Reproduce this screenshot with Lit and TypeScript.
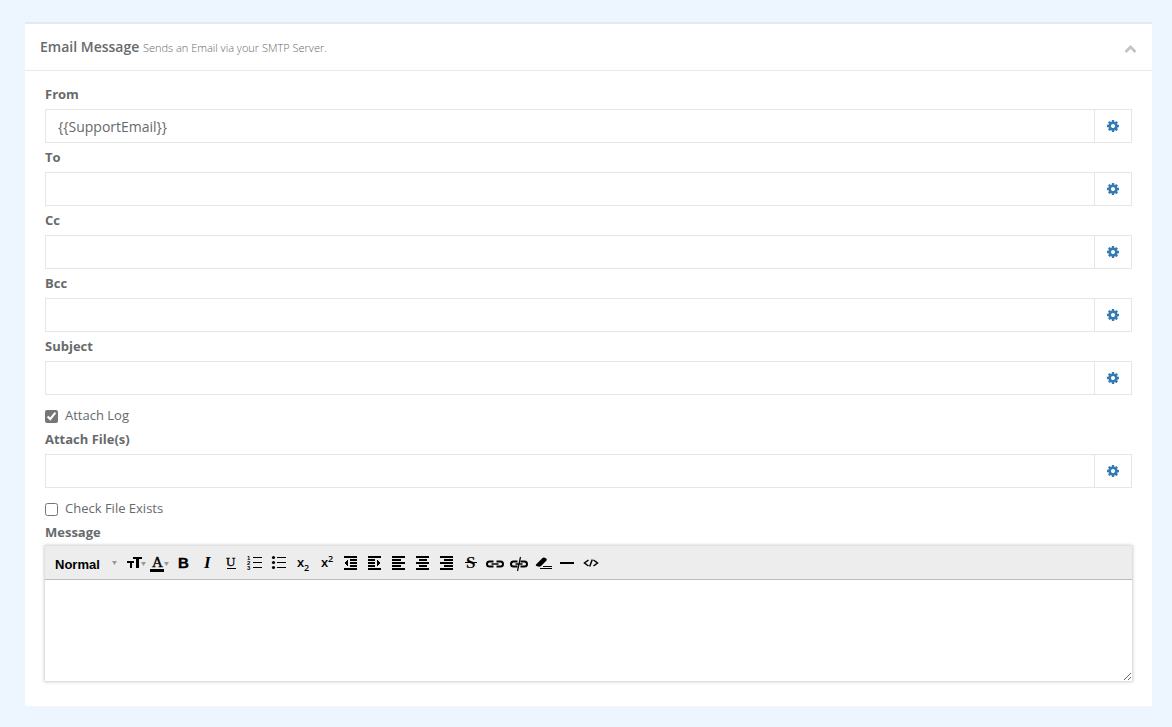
import { LitElement, html, svg, css } from "lit";
import { customElement, property } from "lit/decorators.js";

interface Tool {
  name: string;
  icon: unknown;
}

const rows = (spans: [number, number][]) =>
  spans.map(([x, w], i) => svg`<rect x=${x} y=${5 + i * 3} width=${w} height="2" />`);

const link = svg`
  <g fill="none" stroke="#000" stroke-width="2" shape-rendering="auto">
    <path d="M10.500 11H6.500a2.500 2.500 0 0 0 0 5h4M13.500 11h4a2.500 2.500 0 0 1 0 5h-4" transform="translate(0 -.5)" />
    <path d="M8.500 13h7" stroke-width="1.500" />
  </g>`;

const TOOLS: Tool[] = [
  {
    name: "Bold",
    icon: svg`<text x="7" y="17" class="sans" font-size="15" stroke="#000" stroke-width=".4">B</text>`,
  },
  {
    name: "Italic",
    icon: svg`<text x="9" y="17" class="serif" font-weight="700" font-style="italic" font-size="17">I</text>`,
  },
  {
    name: "Underline",
    icon: svg`<text x="7" y="15" class="serif" font-size="13" stroke="#000" stroke-width=".3">U</text><rect x="8" y="17" width="9" height="1" />`,
  },
  {
    name: "Numbered list",
    icon: svg`<g class="sans" font-size="6"><text x="4" y="9">1</text><text x="4" y="14">2</text><text x="4" y="19">3</text></g>
      <path d="M10 6h9v1h-9zM10 11h9v1h-9zM10 16h9v1h-9z" />`,
  },
  {
    name: "Bulleted list",
    icon: svg`<g shape-rendering="auto"><circle cx="6.5" cy="6.5" r="1.6" /><circle cx="6.5" cy="11.5" r="1.6" /><circle cx="6.5" cy="16.5" r="1.6" /></g>
      <path d="M10 6h9v1h-9zM10 11h9v1h-9zM10 16h9v1h-9z" />`,
  },
  {
    name: "Subscript",
    icon: svg`<text x="6" y="16" class="open" font-size="13">x</text><text x="13" y="20" class="open" font-size="9">2</text>`,
  },
  {
    name: "Superscript",
    icon: svg`<text x="6" y="16" class="open" font-size="13">x</text><text x="13" y="11" class="open" font-size="9">2</text>`,
  },
  {
    name: "Outdent",
    icon: svg`${rows([[5, 13], [11, 7], [11, 7], [11, 7], [5, 13]])}<path d="M9 9v6L5 12z" />`,
  },
  {
    name: "Indent",
    icon: svg`${rows([[5, 13], [5, 7], [5, 7], [5, 7], [5, 13]])}<path d="M14 9v6l4-3z" />`,
  },
  { name: "Align left", icon: rows([[5, 13], [5, 9], [5, 13], [5, 9], [5, 13]]) },
  { name: "Align centre", icon: rows([[5, 13], [8, 8], [5, 13], [8, 8], [5, 13]]) },
  { name: "Align right", icon: rows([[5, 13], [9, 9], [5, 13], [9, 9], [5, 13]]) },
  {
    name: "Strikethrough",
    icon: svg`<text x="7" y="17" class="serif" font-weight="700" font-size="17">S</text><rect x="6" y="11" width="12" height="1" />`,
  },
  { name: "Insert link", icon: link },
  {
    name: "Remove link",
    icon: svg`${link}<path d="M13.5 6L10.5 20" stroke="#000" stroke-width="1.2" shape-rendering="auto" />`,
  },
  {
    name: "Clear format",
    icon: svg`<path d="M5 13.5L11.5 7q1-.8 2.2-.3l1.6.8q1 .8.2 2L10 15q-.8.9-2 .7l-2.500-.6q-1.200-.6-.5-1.600z" shape-rendering="auto" /><path d="M12 15h9v1h-9zM9 17h12v1H9z" />`,
  },
  { name: "Horizontal line", icon: svg`<rect x="5" y="11" width="14" height="2" />` },
  {
    name: "View source",
    icon: svg`<path d="M9.500 9L5.500 12l4 3M14.500 9l4 3-4 3M13.300 8.500l-2.600 7" fill="none" stroke="#000" stroke-width="1.500" shape-rendering="auto" />`,
  },
];

@customElement("macro-field")
class MacroField extends LitElement {
  @property() label = "";
  @property() value = "";

  static styles = css`
    :host {
      display: block;
    }
    .label {
      display: block;
      margin-bottom: 5px;
      font-weight: 700;
      line-height: 19px;
    }
    .group {
      display: flex;
      height: 34px;
      box-sizing: border-box;
      border: 1px solid #e5e6e7;
    }
    .input {
      flex: 1;
      min-width: 0;
      padding: 0 12px;
      border: 0;
      background: none;
      color: #676a6c;
      font: 14px "Open Sans", sans-serif;
    }
    .gear {
      display: flex;
      align-items: center;
      justify-content: center;
      width: 37px;
      padding: 0;
      border: 0;
      border-left: 1px solid #e5e6e7;
      background: #fff;
      cursor: pointer;
    }
    .icon {
      fill: #337ab7;
    }
  `;

  render() {
    return html`
      <label class="label" for="field">${this.label}</label>
      <div class="group">
        <input class="input" id="field" type="text" .value=${this.value} />
        <button class="gear" type="button" aria-label="Insert a value in ${this.label}">
          <svg class="icon" width="12" height="12" viewBox="0 0 1536 1536">
            <path
              d="M1024 768q0-106-75-181t-181-75-181 75-75 181 75 181 181 75 181-75 75-181zm512-109v222q0 12-8 23t-20 13l-185 28q-19 54-39 91 35 50 107 138 10 12 10 25t-9 23q-27 37-99 108t-94 71q-12 0-26-9l-138-108q-44 23-91 38-16 136-29 186-7 28-36 28H657q-14 0-24.500-8.500T621 1506l-28-184q-49-16-90-37l-141 107q-10 9-25 9-14 0-25-11-126-114-165-168-7-10-7-23 0-12 8-23 15-21 51-66.500t54-70.500q-27-50-41-99L29 913q-13-2-21-12.500T0 877V655q0-12 8-23t19-13l186-28q14-46 39-92-40-57-107-138-10-12-10-24 0-10 9-23 26-36 98.500-107.500T337 135q13 0 26 10l138 107q44-23 91-38 16-136 29-186 7-28 36-28h222q14 0 24.500 8.500T915 30l28 184q49 16 90 37l142-107q9-9 24-9 13 0 25 10 129 119 165 170 7 8 7 22 0 12-8 23-15 21-51 66.500t-54 70.500q26 50 41 98l183 28q13 2 21 12.500t8 23.500z"
            />
          </svg>
        </button>
      </div>
    `;
  }
}

@customElement("message-editor")
class MessageEditor extends LitElement {
  static styles = css`
    :host {
      display: block;
    }
    .label {
      display: block;
      margin-bottom: 4px;
      font-weight: 700;
      line-height: 19px;
    }
    .editor {
      box-shadow: 0 0 3px 1px rgba(0, 0, 0, 0.2);
    }
    .toolbar {
      display: flex;
      flex-wrap: wrap;
      align-items: center;
      min-height: 33px;
      padding-left: 10px;
      border-bottom: 1px solid #bbb;
      background: #ededed;
    }
    .style {
      display: flex;
      align-items: center;
      margin-right: 6px;
    }
    .select {
      appearance: none;
      width: 57px;
      height: 24px;
      padding: 4px 0 0;
      border: 0;
      background: none;
      color: #000;
      font: 700 13px "Liberation Sans", Arial, sans-serif;
    }
    .tool {
      width: 24px;
      height: 24px;
      padding: 0;
      border: 0;
      background: none;
      cursor: pointer;
    }
    .glyph {
      display: block;
      shape-rendering: crispEdges;
    }
    .caret {
      fill: #999;
      shape-rendering: auto;
    }
    .sans {
      font-family: "Liberation Sans", Arial, sans-serif;
      font-weight: 700;
    }
    .serif {
      font-family: "Liberation Serif", "Times New Roman", serif;
    }
    .open {
      font-family: "Open Sans", sans-serif;
      font-weight: 600;
    }
    .text {
      display: block;
      width: 100%;
      height: 101px;
      box-sizing: border-box;
      padding: 8px;
      border: 0;
      background: #fff;
      color: #676a6c;
      font: 14px "Open Sans", sans-serif;
      resize: vertical;
    }
  `;

  render() {
    return html`
      <label class="label" for="message">Message</label>
      <div class="editor">
        <div class="toolbar" role="toolbar">
          <div class="style">
            <select class="select" aria-label="Paragraph style">
              <option>Normal</option>
            </select>
            <svg class="caret" width="5" height="4" viewBox="0 0 5 4"><path d="M0 0h5L2.500 4z" /></svg>
          </div>
          <button class="tool" type="button" aria-label="Font size">
            <svg class="glyph" width="24" height="24" viewBox="0 0 24 24">
              <path d="M9 6h9v2h-3v9h-3V8H9zM3 10h7v2H8v5H6v-5H3z" transform="translate(1)" />
              <path class="caret" d="M18 11h5l-2.500 4z" />
            </svg>
          </button>
          <button class="tool" type="button" aria-label="Font colour">
            <svg class="glyph" width="24" height="24" viewBox="0 0 24 24">
              <text x="5" y="16" class="serif" font-size="15" stroke="#000" stroke-width=".4">A</text>
              <rect x="3" y="18" width="14" height="3" />
              <path class="caret" d="M17 11h5l-2.500 4z" />
            </svg>
          </button>
          ${TOOLS.map(
            (tool) => html`
              <button class="tool" type="button" aria-label=${tool.name}>
                <svg class="glyph" width="24" height="24" viewBox="0 0 24 24">${tool.icon}</svg>
              </button>
            `
          )}
        </div>
        <textarea class="text" id="message"></textarea>
      </div>
    `;
  }
}

@customElement("app-root")
class AppRoot extends LitElement {
  static styles = css`
    :host {
      display: block;
      min-height: 100vh;
      box-sizing: border-box;
      padding: 22px 20px 21px 25px;
      background: #edf6fe;
      color: #676a6c;
      font: 13px/19px "Open Sans", sans-serif;
    }
    .panel {
      border-top: 2px solid #e3eaef;
      background: #fff;
    }
    .header {
      display: flex;
      align-items: center;
      justify-content: space-between;
      height: 46px;
      padding: 0 15px;
      border-bottom: 1px solid #e7eaec;
    }
    .title {
      margin: 0;
      font-size: 14px;
      font-weight: 600;
    }
    .hint {
      font-size: 11px;
      font-weight: 300;
    }
    .collapse {
      display: flex;
      margin-top: 4px;
      padding: 0;
      border: 0;
      background: none;
      cursor: pointer;
    }
    .body {
      display: flex;
      flex-direction: column;
      gap: 5px;
      padding: 14px 20px 25px;
    }
    .check {
      display: flex;
      align-items: center;
      gap: 7px;
      height: 20px;
      margin-top: 5px;
    }
    .box {
      width: 13px;
      height: 13px;
      margin: 2px 0 0;
      accent-color: #767676;
    }
  `;

  render() {
    return html`
      <section class="panel">
        <header class="header">
          <h5 class="title">
            Email Message <small class="hint">Sends an Email via your SMTP Server.</small>
          </h5>
          <button class="collapse" type="button" aria-label="Collapse">
            <svg width="13" height="8" viewBox="0 0 13 8">
              <path d="M1.500 7L6.500 2l5 5" fill="none" stroke="#c4c4c4" stroke-width="2.800" />
            </svg>
          </button>
        </header>
        <form class="body">
          <macro-field label="From" value="{{SupportEmail}}"></macro-field>
          <macro-field label="To"></macro-field>
          <macro-field label="Cc"></macro-field>
          <macro-field label="Bcc"></macro-field>
          <macro-field label="Subject"></macro-field>
          <label class="check"><input class="box" type="checkbox" checked />Attach Log</label>
          <macro-field label="Attach File(s)"></macro-field>
          <label class="check"><input class="box" type="checkbox" />Check File Exists</label>
          <message-editor></message-editor>
        </form>
      </section>
    `;
  }
}
